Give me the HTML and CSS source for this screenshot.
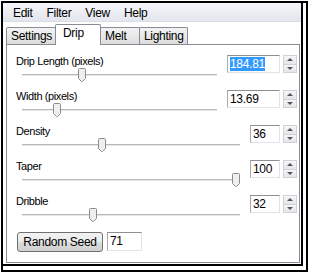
FILE: index.html
```html
<!DOCTYPE html>
<html lang="en">
<head>
    <meta charset="UTF-8">
    <title>Drip</title>
    <link rel="stylesheet" href="styles.css">
</head>
<body>
    <div class="frame">
        <div class="window">
            <div class="menubar">
                <span class="menu-item">Edit</span>
                <span class="menu-item">Filter</span>
                <span class="menu-item">View</span>
                <span class="menu-item">Help</span>
            </div>
            <div class="tabs">
                <span class="tab">Settings</span>
                <span class="tab active">Drip</span>
                <span class="tab">Melt</span>
                <span class="tab">Lighting</span>
            </div>
            <div class="panel">
                <div class="row">
                    <div class="control">
                        <div class="label">Drip Length (pixels)</div>
                        <div class="slider">
                            <div class="track"></div>
                            <span class="thumb" style="left: 30.8%"><svg width="8" height="14" viewBox="0 0 8 14"><path d="M1.5 .5h5a1 1 0 0 1 1 1v9l-3 3h-1l-3-3v-9a1 1 0 0 1 1-1z" fill="#efefef" stroke="#8c8c8c"/></svg></span>
                        </div>
                    </div>
                    <div class="value wide"><span class="selected">184.81</span></div>
                    <div class="spin"><span class="up"></span><span class="down"></span></div>
                </div>
                <div class="row">
                    <div class="control">
                        <div class="label">Width (pixels)</div>
                        <div class="slider">
                            <div class="track"></div>
                            <span class="thumb" style="left: 17.9%"><svg width="8" height="14" viewBox="0 0 8 14"><path d="M1.5 .5h5a1 1 0 0 1 1 1v9l-3 3h-1l-3-3v-9a1 1 0 0 1 1-1z" fill="#efefef" stroke="#8c8c8c"/></svg></span>
                        </div>
                    </div>
                    <div class="value wide">13.69</div>
                    <div class="spin"><span class="up"></span><span class="down"></span></div>
                </div>
                <div class="row">
                    <div class="control">
                        <div class="label">Density</div>
                        <div class="slider">
                            <div class="track"></div>
                            <span class="thumb" style="left: 36.7%"><svg width="8" height="14" viewBox="0 0 8 14"><path d="M1.5 .5h5a1 1 0 0 1 1 1v9l-3 3h-1l-3-3v-9a1 1 0 0 1 1-1z" fill="#efefef" stroke="#8c8c8c"/></svg></span>
                        </div>
                    </div>
                    <div class="value">36</div>
                    <div class="spin"><span class="up"></span><span class="down"></span></div>
                </div>
                <div class="row">
                    <div class="control">
                        <div class="label">Taper</div>
                        <div class="slider">
                            <div class="track"></div>
                            <span class="thumb" style="left: 98.2%"><svg width="8" height="14" viewBox="0 0 8 14"><path d="M1.5 .5h5a1 1 0 0 1 1 1v9l-3 3h-1l-3-3v-9a1 1 0 0 1 1-1z" fill="#efefef" stroke="#8c8c8c"/></svg></span>
                        </div>
                    </div>
                    <div class="value">100</div>
                    <div class="spin"><span class="up"></span><span class="down"></span></div>
                </div>
                <div class="row">
                    <div class="control">
                        <div class="label">Dribble</div>
                        <div class="slider">
                            <div class="track"></div>
                            <span class="thumb" style="left: 32.6%"><svg width="8" height="14" viewBox="0 0 8 14"><path d="M1.5 .5h5a1 1 0 0 1 1 1v9l-3 3h-1l-3-3v-9a1 1 0 0 1 1-1z" fill="#efefef" stroke="#8c8c8c"/></svg></span>
                        </div>
                    </div>
                    <div class="value">32</div>
                    <div class="spin"><span class="up"></span><span class="down"></span></div>
                </div>
                <div class="seed-row">
                    <button class="btn">Random Seed</button>
                    <div class="value seed">71</div>
                </div>
            </div>
        </div>
    </div>
</body>
</html>
```

FILE: styles.css
```css
body {
    margin: 0;
    background: #fff;
    font-family: "Liberation Sans", Arial, sans-serif;
    color: #000;
}
.frame {
    box-sizing: border-box;
    width: 307px;
    height: 271px;
    margin: 1px 0 0 1px;
    padding: 0 3px 4px 0;
    border: 2px solid #000;
    background: #fff;
}
.window {
    box-sizing: border-box;
    height: 100%;
    display: flex;
    flex-direction: column;
    border-right: 2px solid #000;
    border-bottom: 2px solid #000;
    background: #fff;
}
.menubar {
    display: flex;
    height: 19px;
    padding: 1px 0 0 3px;
    box-sizing: border-box;
    background: linear-gradient(#f5f6f8, #e2e6ed);
    border-bottom: 1px solid #d9dde3;
}
.menu-item {
    padding: 0 7px;
    font-size: 12px;
    line-height: 18px;
    letter-spacing: -0.3px;
}
.tabs {
    display: flex;
    align-items: flex-end;
    height: 22px;
    padding-left: 3px;
}
.tab {
    box-sizing: border-box;
    min-width: 40px;
    height: 17px;
    padding: 0 3px 0 4px;
    border: 1px solid #898c95;
    border-bottom: none;
    border-radius: 2px 2px 0 0;
    margin-left: -1px;
    background: linear-gradient(#f3f3f3, #e8e8e8 50%, #dcdcdc);
    font-size: 12px;
    line-height: 16px;
    letter-spacing: -0.3px;
}
.tab:first-child {
    margin-left: 0;
}
.tab.active {
    position: relative;
    z-index: 1;
    min-width: 46px;
    height: 21px;
    margin-bottom: -1px;
    padding-left: 7px;
    background: #fff;
}
.panel {
    flex: 1;
    display: flex;
    flex-direction: column;
    gap: 8px;
    margin: 0 1px 1px 3px;
    padding: 10px 2px 0 9px;
    border: 1px solid #898c95;
    background: #fff;
}
.row {
    display: flex;
    align-items: flex-start;
}
.control {
    flex: 1;
    margin-right: 5px;
}
.label {
    font-size: 11px;
    line-height: 13px;
    letter-spacing: -0.4px;
}
.slider {
    position: relative;
    height: 14px;
    margin: 0 5px 0 6px;
}
.track {
    height: 0;
    padding-top: 6px;
    border-bottom: 1px solid #b9b9b9;
    box-shadow: 0 1px 0 #e6e6e6;
}
.thumb {
    position: absolute;
    top: 0;
    width: 8px;
    height: 14px;
    transform: translateX(-50%);
}
.thumb svg {
    display: block;
}
.value {
    box-sizing: border-box;
    width: 30px;
    height: 18px;
    padding-left: 2px;
    border: 1px solid #e2e3ea;
    border-top-color: #8e8f8f;
    border-left-color: #a9abb1;
    font-size: 12px;
    line-height: 16px;
    letter-spacing: -0.3px;
}
.value.wide {
    width: 53px;
}
.selected {
    display: inline-block;
    background: #3399ff;
    color: #fff;
    line-height: 14px;
}
.spin {
    display: flex;
    flex-direction: column;
    width: 14px;
    height: 18px;
    margin-left: 3px;
}
.spin span {
    position: relative;
    flex: 1;
    border: 1px solid #cfd1d6;
    background: linear-gradient(#f7f7f7, #e6e6e6);
}
.spin span + span {
    border-top: none;
}
.spin span::after {
    content: "";
    position: absolute;
    left: 3px;
    top: 2px;
    border-left: 3px solid transparent;
    border-right: 3px solid transparent;
}
.spin .up::after {
    border-bottom: 3px solid #4e5766;
}
.spin .down::after {
    border-top: 3px solid #4e5766;
}
.seed-row {
    display: flex;
    align-items: flex-start;
    gap: 4px;
    margin-top: 2px;
}
.btn {
    box-sizing: border-box;
    width: 86px;
    height: 20px;
    margin: 0 0 0 1px;
    padding: 0;
    border: 1px solid #707070;
    border-radius: 3px;
    background: linear-gradient(#f2f2f2, #ebebeb 50%, #dddddd 50%, #cfcfcf);
    font-family: "Liberation Sans", Arial, sans-serif;
    font-size: 12px;
    letter-spacing: -0.3px;
    color: #000;
}
.value.seed {
    width: 35px;
    height: 19px;
}
```
